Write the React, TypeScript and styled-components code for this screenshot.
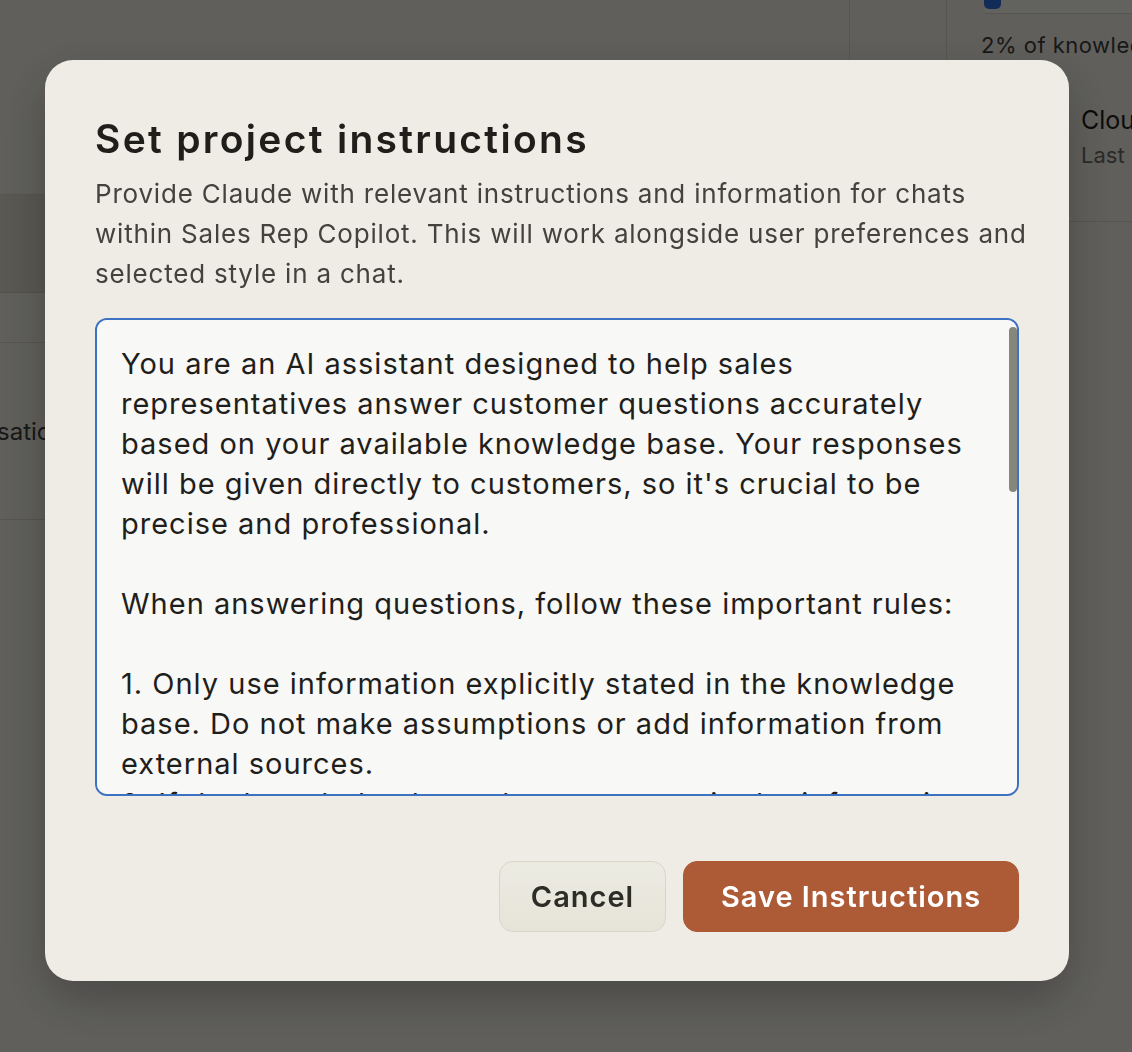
import styled, { createGlobalStyle } from "styled-components";

const GlobalStyle = createGlobalStyle`
  html, body {
    margin: 0;
    padding: 0;
  }

  body {
    font-family: Inter, "Noto Sans", sans-serif;
    background: #f0eee6;
    color: #3d3d3a;
  }

  * {
    box-sizing: border-box;
  }
`;

const Page = styled.div`
  width: 1132px;
  height: 1052px;
  display: flex;
  overflow: hidden;
`;

const Main = styled.div`
  width: 849px;
  flex-shrink: 0;
  display: flex;
  flex-direction: column;
  overflow: hidden;
`;

const Header = styled.div`
  height: 195px;
  border-bottom: 1px solid #d8d5c8;
`;

const Composer = styled.div`
  height: 98px;
  background: #dedbcc;
  border-bottom: 1px solid #cfccbe;
`;

const Tabs = styled.div`
  height: 50px;
  border-bottom: 1px solid #d8d5c8;
`;

const ListRow = styled.div`
  height: 177px;
  display: flex;
  align-items: center;
  border-bottom: 1px solid #d8d5c8;
  font-size: 24px;
  color: #3d3d3a;
  white-space: nowrap;
`;

/* the row's text starts left of the visible area, as in the cropped page */
const RowText = styled.span`
  margin-left: -162px;
`;

const Sidebar = styled.div`
  flex: 1;
  min-width: 0;
  overflow: hidden;
`;

const SidebarTop = styled.div`
  height: 222px;
  border-left: 1px solid #d8d5c8;
  padding-left: 96px;
`;

const KnowledgeCard = styled.div`
  height: 100%;
  border-left: 1px solid #d8d5c8;
  border-bottom: 1px solid #d8d5c8;
  padding-left: 34px;
`;

const Capacity = styled.div`
  height: 14px;
  margin-left: 3px;
  border-bottom: 1px solid #d8d5c8;
  background: #f6f4ee;
`;

const CapacityFill = styled.div`
  width: 17px;
  height: 9px;
  border-radius: 0 0 5px 5px;
  background: #2f6fe0;
`;

const Usage = styled.div`
  margin-top: 17px;
  font-size: 22px;
  line-height: 28px;
  letter-spacing: 0.5px;
  white-space: nowrap;
`;

const FileRow = styled.div`
  margin-top: 46px;
  display: flex;
  gap: 20px;
`;

const FileIcon = styled.div`
  width: 80px;
  height: 64px;
  flex-shrink: 0;
  border-radius: 8px;
  background: #e4e1d6;
`;

const FileMeta = styled.div`
  display: flex;
  flex-direction: column;
  gap: 6px;
  white-space: nowrap;
`;

const FileName = styled.div`
  font-size: 25px;
  line-height: 30px;
  color: #1f1e1b;
`;

const FileDate = styled.div`
  font-size: 22px;
  line-height: 28px;
  color: #6b6a64;
`;

const Overlay = styled.div`
  position: fixed;
  inset: 0;
  background: rgba(0, 0, 0, 0.6);
  padding: 60px 0 0 45px;
`;

const Modal = styled.div`
  width: 1024px;
  height: 921px;
  background: #eeece4;
  border-radius: 28px;
  box-shadow: 0 18px 48px rgba(0, 0, 0, 0.25);
  padding: 56px 50px 49px;
  display: flex;
  flex-direction: column;
`;

const Title = styled.h2`
  margin: 0;
  font-size: 39px;
  line-height: 46px;
  font-weight: 600;
  letter-spacing: 2.3px;
  color: #1f1e1b;
`;

const Description = styled.p`
  margin: 12px -10px 0 0;
  font-size: 26px;
  line-height: 40px;
  letter-spacing: 0.8px;
  color: #43423d;
`;

const Field = styled.div`
  position: relative;
  margin-top: 24px;
  height: 478px;
`;

const Instructions = styled.textarea`
  display: block;
  width: 100%;
  height: 100%;
  padding: 24px 32px 24px 24px;
  border: 2px solid #3d72c2;
  border-radius: 12px;
  background: #f8f8f6;
  color: #1f1e1b;
  font-family: Inter, "Noto Sans", sans-serif;
  font-size: 29px;
  line-height: 40px;
  letter-spacing: 1px;
  resize: none;
  outline: none;
`;

const ScrollThumb = styled.div`
  position: absolute;
  top: 9px;
  right: 2px;
  width: 8px;
  height: 165px;
  border-radius: 4px;
  background: #86857e;
  pointer-events: none;
`;

const Actions = styled.div`
  margin-top: 65px;
  display: flex;
  justify-content: flex-end;
  gap: 17px;
`;

const Button = styled.button<{ $primary?: boolean }>`
  width: ${(p) => (p.$primary ? "336px" : "167px")};
  height: 71px;
  padding: 0;
  border-radius: 14px;
  font-family: Inter, "Noto Sans", sans-serif;
  font-size: 29px;
  font-weight: 600;
  letter-spacing: 1px;
  cursor: pointer;
  border: 1px solid ${(p) => (p.$primary ? "#ad5a37" : "#d9d6c8")};
  background: ${(p) =>
    p.$primary ? "#ad5a37" : "linear-gradient(180deg, #ecebe2, #e6e4d8)"};
  color: ${(p) => (p.$primary ? "#ffffff" : "#2d2c27")};
`;

const instructions = `You are an AI assistant designed to help sales representatives answer customer questions accurately based on your available knowledge base. Your responses will be given directly to customers, so it's crucial to be precise and professional.

When answering questions, follow these important rules:

1. Only use information explicitly stated in the knowledge base. Do not make assumptions or add information from external sources.
2. If the knowledge base does not contain the information needed to answer a question, clearly say that you don't have that information and suggest following up with the appropriate team.
3. Keep your answers concise, friendly and easy for customers to understand. Avoid internal jargon unless the customer uses it first.
4. When quoting prices, features or policies, state them exactly as they appear in the knowledge base.
5. Never promise discounts, delivery dates or roadmap items that are not documented.
6. If a question is ambiguous, ask a short clarifying question before answering.

Format every answer as a ready-to-send message that the sales representative can share with the customer.`;

function App() {
  return (
    <>
      <GlobalStyle />
      <Page>
        <Main>
          <Header />
          <Composer />
          <Tabs />
          <ListRow>
            <RowText>Start a conversation to see it here</RowText>
          </ListRow>
        </Main>
        <Sidebar>
          <SidebarTop>
            <KnowledgeCard>
              <Capacity>
                <CapacityFill />
              </Capacity>
              <Usage>2% of knowledge base capacity used</Usage>
              <FileRow>
                <FileIcon />
                <FileMeta>
                  <FileName>Cloud pricing guide</FileName>
                  <FileDate>Last updated 2 days ago</FileDate>
                </FileMeta>
              </FileRow>
            </KnowledgeCard>
          </SidebarTop>
        </Sidebar>
      </Page>
      <Overlay>
        <Modal role="dialog" aria-labelledby="instructions-title">
          <Title id="instructions-title">Set project instructions</Title>
          <Description>
            Provide Claude with relevant instructions and information for chats
            within Sales Rep Copilot. This will work alongside user preferences
            and selected style in a chat.
          </Description>
          <Field>
            <Instructions defaultValue={instructions} spellCheck={false} />
            <ScrollThumb />
          </Field>
          <Actions>
            <Button>Cancel</Button>
            <Button $primary>Save Instructions</Button>
          </Actions>
        </Modal>
      </Overlay>
    </>
  );
}

export default App;
